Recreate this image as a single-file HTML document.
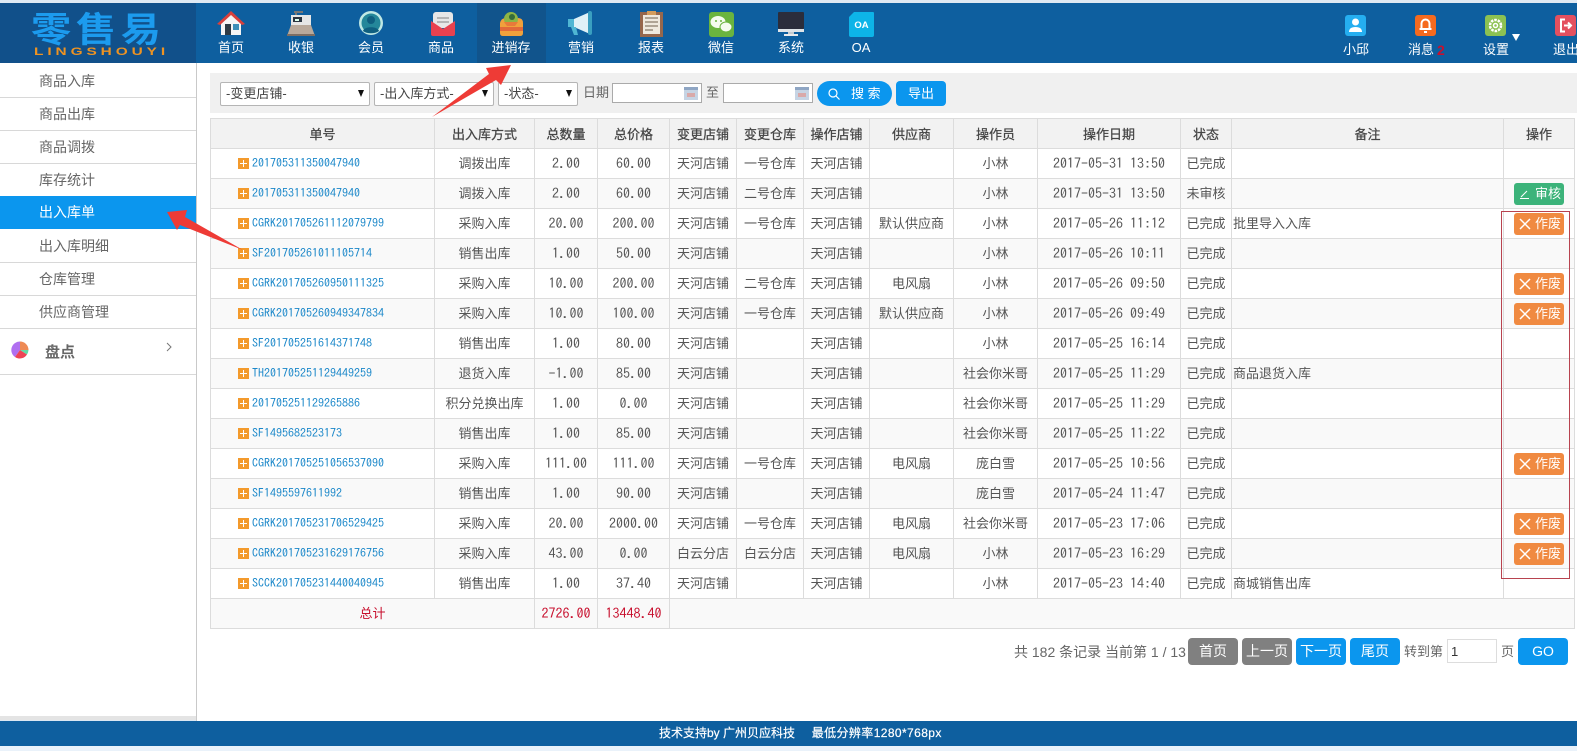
<!DOCTYPE html>
<html><head><meta charset="utf-8"><title>出入库单</title>
<style>
*{box-sizing:border-box}
html,body{margin:0;padding:0;width:1577px;height:751px;overflow:hidden;background:#fff}
body{position:relative;font-family:"Liberation Sans","Noto Sans CJK SC",sans-serif;font-size:13px;color:#555}
.a{position:absolute}
.nav{position:absolute;top:3px;width:70px;height:60px;text-align:center;color:#fff;font-size:13px}
.nav svg{position:absolute;left:17px;top:6px}
.nav span{position:absolute;left:0;right:0;top:35px;line-height:20px;white-space:nowrap}
.r{position:absolute;top:15px;width:21px;height:21px;border-radius:3px}
.rl{position:absolute;top:40px;color:#fff;font-size:13px;line-height:20px;white-space:nowrap}
.si{position:absolute;left:0;width:196px;height:33px;line-height:32px;padding-left:39px;font-size:14px;color:#666;border-bottom:1px solid #d8d8d8}
.sel{position:absolute;top:82px;height:24px;background:#fff;border:1px solid #b5b5b5;border-radius:2px;font-size:13px;color:#444;line-height:22px;padding-left:5px}
.sel i{position:absolute;right:5px;top:7px;width:0;height:0;border:3.5px solid transparent;border-top:7px solid #111;border-bottom:0}
.inp{position:absolute;top:83px;width:90px;height:20px;background:#fff;border:1px solid #aaa}
.inp b{position:absolute;right:3px;top:3px;width:14px;height:13px;background:#c6d4e4;border-top:3px solid #8fa6c4}
.inp b:after{content:"";position:absolute;left:3px;top:3px;width:8px;height:4px;background:#d9a9a9}
.btn{position:absolute;color:#fff;text-align:center;border-radius:4px;font-size:14px}
table{position:absolute;left:210px;top:118px;width:1365px;table-layout:fixed;border-collapse:collapse;font-size:13px;color:#555}
td,th{border:1px solid #dcdcdc;height:30px;padding:0;text-align:center;white-space:nowrap;overflow:hidden;font-weight:normal}
td{padding-bottom:2px}
th{background:#f2f2f2;color:#444;-webkit-text-stroke:.25px #444}
tr:nth-child(even) td{background:#fff}
tr:nth-child(odd) td{background:#f9f9f9}
.n{font-family:"IPAGothic",monospace;font-size:14px}
.l{text-align:left;padding-left:27px;font-family:"IPAGothic",monospace;font-size:12px;color:#1a87c9}
.l i{display:inline-block;width:11px;height:11px;background:#f39a2c;margin-right:3px;vertical-align:-2px;position:relative}
.l i:before{content:"";position:absolute;left:2px;right:2px;top:5px;height:1px;background:#fff}
.l i:after{content:"";position:absolute;top:2px;bottom:2px;left:5px;width:1px;background:#fff}
.t{text-align:left;padding-left:1px}
.z{display:block;width:50px;height:22px;margin-left:10px;background:#f08a41;color:#fff;border-radius:3px;line-height:22px;position:relative;top:1px;padding-left:21px;text-align:left}
.z svg{position:absolute;left:5px;top:5px}
.g{background:#3cb37a}
.red{color:#c8102e}
</style></head><body>
<div class="a" style="left:0;top:0;width:1577px;height:3px;background:#dfe9f3"></div>
<div class="a" style="left:0;top:3px;width:1577px;height:60px;background:#0e5f9f"></div>
<div class="a" style="left:0;top:3px;width:196px;height:60px;background:#11508a"></div>
<div class="a" style="left:31px;top:3px;font-size:35px;line-height:50px;font-weight:bold;color:#1c9bee;letter-spacing:4px;white-space:nowrap;font-family:'Noto Sans CJK SC',sans-serif;transform:scaleX(1.15);transform-origin:0 0">零售易</div>
<div class="a" style="left:34px;top:47px;font-size:11px;line-height:11px;font-weight:bold;color:#ee9322;letter-spacing:2.8px;white-space:nowrap;font-family:'Liberation Sans',sans-serif;transform:scaleX(1.4);transform-origin:0 0">LINGSHOUYI</div>
<div class="a" style="left:477px;top:3px;width:69px;height:60px;background:#11548c"></div>

<div class="nav" style="left:196px"><svg width="36" height="28" viewBox="0 0 36 28"><path d="M18 3 31 15 28 15V26H8V15H5Z" fill="#f4f4f4"/><path d="M4 15 18 2 32 15 29 16 18 6 7 16Z" fill="#d8403c"/><rect x="12" y="15" width="6" height="11" fill="#2d3a44"/><rect x="20" y="15" width="6" height="6" fill="#3d8fb8"/></svg><span>首页</span></div>
<div class="nav" style="left:266px"><svg width="36" height="28" viewBox="0 0 36 28"><rect x="11" y="2" width="9" height="2" fill="#777"/><rect x="12" y="3" width="2" height="5" fill="#777"/><rect x="8" y="6" width="20" height="13" fill="#e6e6e6"/><rect x="10" y="8" width="9" height="5" fill="#2a3440"/><rect x="12" y="10" width="4" height="2" fill="#dfe"/><path d="M8 16H28L32 27H4Z" fill="#b9a99b"/><rect x="4" y="25" width="28" height="2" fill="#7e6e63"/></svg><span>收银</span></div>
<div class="nav" style="left:336px"><svg width="36" height="28" viewBox="0 0 36 28"><circle cx="18" cy="14" r="12" fill="#bfe8e4"/><circle cx="18" cy="14" r="9.500" fill="#24879a"/><circle cx="18" cy="11" r="4" fill="#0f5f80"/><path d="M10 22C11 17 25 17 26 22 22 25 14 25 10 22Z" fill="#0f5f80"/></svg><span>会员</span></div>
<div class="nav" style="left:406px"><svg width="36" height="28" viewBox="0 0 36 28"><rect x="10" y="3" width="20" height="16" rx="3" fill="#e7e7e7"/><rect x="14" y="8" width="12" height="2" fill="#b5b5b5"/><rect x="14" y="12" width="12" height="2" fill="#b5b5b5"/><path d="M8 12 20 20 32 12V25Q32 27 30 27H10Q8 27 8 25Z" fill="#e8414f"/></svg><span>商品</span></div>
<div class="nav" style="left:476px"><svg width="36" height="28" viewBox="0 0 36 28"><path d="M7 14Q8 9 13 9H25Q30 9 30 14V24Q30 27 27 27H10Q7 27 7 24Z" fill="#f0a13c"/><rect x="7" y="18" width="23" height="4" fill="#e2693a"/><circle cx="18" cy="10" r="7" fill="#8fb545"/><circle cx="19" cy="8" r="3" fill="#356b3a"/><path d="M11 13 25 13 22 17H14Z" fill="#e87a3a"/></svg><span>进销存</span></div>
<div class="nav" style="left:546px"><svg width="36" height="28" viewBox="0 0 36 28"><path d="M5 10H11L27 3V25L11 18H5Z" fill="#dff1f7"/><rect x="5" y="10" width="6" height="8" fill="#4fb6d3"/><rect x="25" y="2" width="4" height="24" rx="2" fill="#3a9fc0"/><path d="M8 18H13L15 26H11Z" fill="#4fb6d3"/></svg><span>营销</span></div>
<div class="nav" style="left:616px"><svg width="36" height="28" viewBox="0 0 36 28"><rect x="7" y="3" width="23" height="25" fill="#96674c"/><rect x="10" y="6" width="17" height="19" fill="#efe9de"/><rect x="14" y="2" width="9" height="4" fill="#d39c5c"/><path d="M12 9H25M12 13H25M12 17H25M12 21H20" stroke="#9a8d7d" stroke-width="1.500"/></svg><span>报表</span></div>
<div class="nav" style="left:686px"><svg width="36" height="28" viewBox="0 0 36 28"><rect x="6" y="3" width="25" height="25" rx="3" fill="#6ab43f"/><ellipse cx="15" cy="13" rx="7.500" ry="6" fill="#f5fbf0"/><ellipse cx="23" cy="18" rx="6" ry="5" fill="#f5fbf0" stroke="#6ab43f"/><circle cx="13" cy="12" r="1" fill="#6ab43f"/><circle cx="18" cy="12" r="1" fill="#6ab43f"/></svg><span>微信</span></div>
<div class="nav" style="left:756px"><svg width="36" height="28" viewBox="0 0 36 28"><rect x="5" y="3" width="26" height="17" rx="1" fill="#2b2d3b"/><rect x="5" y="20" width="26" height="3" fill="#dfe4e8"/><rect x="15" y="23" width="6" height="2" fill="#c5cbd0"/><rect x="11" y="25" width="14" height="2" fill="#e8eaec"/></svg><span>系统</span></div>
<div class="nav" style="left:826px"><svg width="36" height="28" viewBox="0 0 36 28"><path d="M11 3H30Q31 3 31 4V26Q31 28 29 28H8Q6 28 6 26V8Z" fill="#0db4e8"/><text x="18.500" y="19" font-family="Liberation Sans" font-size="9.500" font-weight="bold" fill="#fff" text-anchor="middle">OA</text></svg><span>OA</span></div>

<div class="r" style="left:1345px;background:#25aef0"><svg width="21" height="21" viewBox="0 0 21 21"><circle cx="10.500" cy="7" r="3.500" fill="#fff"/><path d="M4 17Q4 12 10.500 12T17 17Z" fill="#fff"/></svg></div>
<div class="rl" style="left:1343px">小邱</div>
<div class="r" style="left:1415px;background:#f56a1e"><svg width="21" height="21" viewBox="0 0 21 21" fill="none" stroke="#fff" stroke-width="2"><path d="M6.500 13V8.500A4 4 0 0 1 14.500 8.500V13"/><path d="M4.500 14H16.500"/><path d="M9 17H12"/></svg></div>
<div class="rl" style="left:1408px">消息</div><div class="rl" style="left:1437px;color:#c8102e;font-weight:bold;font-size:14px">2</div>
<div class="r" style="left:1485px;background:#8cc152"><svg width="21" height="21" viewBox="0 0 21 21" fill="none" stroke="#fff"><circle cx="10.500" cy="10.500" r="5.500" stroke-width="2.500" stroke-dasharray="2.500 1"/><circle cx="10.500" cy="10.500" r="2" stroke-width="1.500"/></svg></div>
<div class="rl" style="left:1483px">设置</div>
<div class="a" style="left:1512px;top:34px;width:0;height:0;border:4px solid transparent;border-top:7px solid #fff;border-bottom:0"></div>
<div class="r" style="left:1555px;background:#e4505f"><svg width="21" height="21" viewBox="0 0 21 21" fill="none" stroke="#fff" stroke-width="2"><path d="M10 4.500H6V16.500H10"/><path d="M9 10.500H16M13 7.500 16 10.500 13 13.500"/></svg></div>
<div class="rl" style="left:1553px">退出</div>

<div class="si" style="top:65px">商品入库</div>
<div class="si" style="top:98px">商品出库</div>
<div class="si" style="top:131px">商品调拨</div>
<div class="si" style="top:164px">库存统计</div>
<div class="si" style="top:196px;background:#0b96ee;color:#fff;border:0">出入库单</div>
<div class="si" style="top:230px">出入库明细</div>
<div class="si" style="top:263px">仓库管理</div>
<div class="si" style="top:296px">供应商管理</div>
<div class="a" style="left:0;top:329px;width:196px;height:46px;border-bottom:1px solid #d8d8d8"></div>
<div class="a" style="left:196px;top:63px;width:1px;height:658px;background:#c9c9c9"></div>
<svg class="a" style="left:11px;top:341px" width="18" height="18" viewBox="0 0 18 18"><path d="M9 9V.500A8.500 8.500 0 0 0 4 16Z" fill="#b06ff0"/><path d="M9 9V.500A8.500 8.500 0 0 1 17.500 9Z" fill="#ee8a55"/><path d="M9 9H17.500A8.500 8.500 0 0 1 16 13.500Z" fill="#5fdca8"/><path d="M9 9 16 13.500A8.500 8.500 0 0 1 4 16Z" fill="#ee4455"/></svg>
<div class="a" style="left:45px;top:342px;font-size:15px;line-height:22px;font-weight:bold;color:#666">盘点</div>
<svg class="a" style="left:165px;top:342px" width="8" height="10" viewBox="0 0 8 10" fill="none" stroke="#777"><path d="M2 1 6 5 2 9"/></svg>
<div class="a" style="left:0;top:716px;width:196px;height:4px;background:#e4e4e4"></div>
<div class="a" style="left:0;top:720px;width:196px;height:1px;background:#dbe7f2"></div>

<div class="a" style="left:210px;top:73px;width:1367px;height:40px;background:#f0f0f0"></div>
<div class="sel" style="left:220px;width:150px">-变更店铺-<i></i></div>
<div class="sel" style="left:374px;width:120px">-出入库方式-<i></i></div>
<div class="sel" style="left:498px;width:80px">-状态-<i></i></div>
<div class="a" style="left:583px;top:82px;font-size:13px;line-height:22px;color:#666">日期</div>
<div class="inp" style="left:612px"><b></b></div>
<div class="a" style="left:706px;top:82px;font-size:13px;line-height:22px;color:#666">至</div>
<div class="inp" style="left:723px"><b></b></div>
<div class="btn" style="left:817px;top:81px;width:75px;height:25px;border-radius:13px;background:#0b96ee;line-height:25px;padding-left:34px;font-size:13px;text-align:left"><svg class="a" style="left:10px;top:6px" width="14" height="14" viewBox="0 0 14 14" fill="none" stroke="#fff" stroke-width="1.200"><circle cx="6" cy="6" r="4"/><path d="M9 9 12.500 12.500"/></svg>搜 索</div>
<div class="btn" style="left:896px;top:81px;width:50px;height:25px;background:#0b96ee;line-height:25px;font-size:13px">导出</div>

<table>
<colgroup><col style="width:224px"><col style="width:100px"><col style="width:63px"><col style="width:72px"><col style="width:67px"><col style="width:67px"><col style="width:66px"><col style="width:84px"><col style="width:84px"><col style="width:143px"><col style="width:51px"><col style="width:272px"><col style="width:71px"></colgroup>
<tr><th>单号</th><th>出入库方式</th><th>总数量</th><th>总价格</th><th>变更店铺</th><th>变更仓库</th><th>操作店铺</th><th>供应商</th><th>操作员</th><th>操作日期</th><th>状态</th><th>备注</th><th>操作</th></tr>
<tr><td class="l"><i></i>201705311350047940</td><td>调拨出库</td><td class="n">2.00</td><td class="n">60.00</td><td>天河店铺</td><td>一号仓库</td><td>天河店铺</td><td></td><td>小林</td><td class="n">2017-05-31 13:50</td><td>已完成</td><td></td><td></td></tr>
<tr><td class="l"><i></i>201705311350047940</td><td>调拨入库</td><td class="n">2.00</td><td class="n">60.00</td><td>天河店铺</td><td>二号仓库</td><td>天河店铺</td><td></td><td>小林</td><td class="n">2017-05-31 13:50</td><td>未审核</td><td></td><td><span class="z g"><svg width="11" height="12" viewBox="0 0 11 12" fill="none" stroke="#fff"><path d="M1 10.500H10M2 9 8 3"/></svg>审核</span></td></tr>
<tr><td class="l"><i></i>CGRK201705261112079799</td><td>采购入库</td><td class="n">20.00</td><td class="n">200.00</td><td>天河店铺</td><td>一号仓库</td><td>天河店铺</td><td>默认供应商</td><td>小林</td><td class="n">2017-05-26 11:12</td><td>已完成</td><td class="t">批里导入入库</td><td><span class="z"><svg width="12" height="12" viewBox="0 0 12 12" stroke="#fff" stroke-width="1.500"><path d="M1 1 11 11M11 1 1 11"/></svg>作废</span></td></tr>
<tr><td class="l"><i></i>SF201705261011105714</td><td>销售出库</td><td class="n">1.00</td><td class="n">50.00</td><td>天河店铺</td><td></td><td>天河店铺</td><td></td><td>小林</td><td class="n">2017-05-26 10:11</td><td>已完成</td><td></td><td></td></tr>
<tr><td class="l"><i></i>CGRK201705260950111325</td><td>采购入库</td><td class="n">10.00</td><td class="n">200.00</td><td>天河店铺</td><td>二号仓库</td><td>天河店铺</td><td>电风扇</td><td>小林</td><td class="n">2017-05-26 09:50</td><td>已完成</td><td></td><td><span class="z"><svg width="12" height="12" viewBox="0 0 12 12" stroke="#fff" stroke-width="1.500"><path d="M1 1 11 11M11 1 1 11"/></svg>作废</span></td></tr>
<tr><td class="l"><i></i>CGRK201705260949347834</td><td>采购入库</td><td class="n">10.00</td><td class="n">100.00</td><td>天河店铺</td><td>一号仓库</td><td>天河店铺</td><td>默认供应商</td><td>小林</td><td class="n">2017-05-26 09:49</td><td>已完成</td><td></td><td><span class="z"><svg width="12" height="12" viewBox="0 0 12 12" stroke="#fff" stroke-width="1.500"><path d="M1 1 11 11M11 1 1 11"/></svg>作废</span></td></tr>
<tr><td class="l"><i></i>SF201705251614371748</td><td>销售出库</td><td class="n">1.00</td><td class="n">80.00</td><td>天河店铺</td><td></td><td>天河店铺</td><td></td><td>小林</td><td class="n">2017-05-25 16:14</td><td>已完成</td><td></td><td></td></tr>
<tr><td class="l"><i></i>TH201705251129449259</td><td>退货入库</td><td class="n">-1.00</td><td class="n">85.00</td><td>天河店铺</td><td></td><td>天河店铺</td><td></td><td>社会你米哥</td><td class="n">2017-05-25 11:29</td><td>已完成</td><td class="t">商品退货入库</td><td></td></tr>
<tr><td class="l"><i></i>201705251129265886</td><td>积分兑换出库</td><td class="n">1.00</td><td class="n">0.00</td><td>天河店铺</td><td></td><td>天河店铺</td><td></td><td>社会你米哥</td><td class="n">2017-05-25 11:29</td><td>已完成</td><td></td><td></td></tr>
<tr><td class="l"><i></i>SF1495682523173</td><td>销售出库</td><td class="n">1.00</td><td class="n">85.00</td><td>天河店铺</td><td></td><td>天河店铺</td><td></td><td>社会你米哥</td><td class="n">2017-05-25 11:22</td><td>已完成</td><td></td><td></td></tr>
<tr><td class="l"><i></i>CGRK201705251056537090</td><td>采购入库</td><td class="n">111.00</td><td class="n">111.00</td><td>天河店铺</td><td>一号仓库</td><td>天河店铺</td><td>电风扇</td><td>庞白雪</td><td class="n">2017-05-25 10:56</td><td>已完成</td><td></td><td><span class="z"><svg width="12" height="12" viewBox="0 0 12 12" stroke="#fff" stroke-width="1.500"><path d="M1 1 11 11M11 1 1 11"/></svg>作废</span></td></tr>
<tr><td class="l"><i></i>SF1495597611992</td><td>销售出库</td><td class="n">1.00</td><td class="n">90.00</td><td>天河店铺</td><td></td><td>天河店铺</td><td></td><td>庞白雪</td><td class="n">2017-05-24 11:47</td><td>已完成</td><td></td><td></td></tr>
<tr><td class="l"><i></i>CGRK201705231706529425</td><td>采购入库</td><td class="n">20.00</td><td class="n">2000.00</td><td>天河店铺</td><td>一号仓库</td><td>天河店铺</td><td>电风扇</td><td>社会你米哥</td><td class="n">2017-05-23 17:06</td><td>已完成</td><td></td><td><span class="z"><svg width="12" height="12" viewBox="0 0 12 12" stroke="#fff" stroke-width="1.500"><path d="M1 1 11 11M11 1 1 11"/></svg>作废</span></td></tr>
<tr><td class="l"><i></i>CGRK201705231629176756</td><td>采购入库</td><td class="n">43.00</td><td class="n">0.00</td><td>白云分店</td><td>白云分店</td><td>天河店铺</td><td>电风扇</td><td>小林</td><td class="n">2017-05-23 16:29</td><td>已完成</td><td></td><td><span class="z"><svg width="12" height="12" viewBox="0 0 12 12" stroke="#fff" stroke-width="1.500"><path d="M1 1 11 11M11 1 1 11"/></svg>作废</span></td></tr>
<tr><td class="l"><i></i>SCCK201705231440040945</td><td>销售出库</td><td class="n">1.00</td><td class="n">37.40</td><td>天河店铺</td><td></td><td>天河店铺</td><td></td><td>小林</td><td class="n">2017-05-23 14:40</td><td>已完成</td><td class="t">商城销售出库</td><td></td></tr>
<tr><td colspan="2" class="red">总计</td><td class="n red">2726.00</td><td class="n red">13448.40</td><td colspan="9"></td></tr>
</table>

<div class="a" style="left:1014px;top:641px;font-size:14px;line-height:22px;color:#666;white-space:nowrap">共 182 条记录 当前第 1 / 13</div>
<div class="btn" style="left:1188px;top:638px;width:50px;height:27px;line-height:27px;background:#808080">首页</div>
<div class="btn" style="left:1242px;top:638px;width:50px;height:27px;line-height:27px;background:#808080">上一页</div>
<div class="btn" style="left:1296px;top:638px;width:50px;height:27px;line-height:27px;background:#0b96ee">下一页</div>
<div class="btn" style="left:1350px;top:638px;width:50px;height:27px;line-height:27px;background:#0b96ee">尾页</div>
<div class="a" style="left:1404px;top:641px;font-size:13px;line-height:22px;color:#666">转到第</div>
<div class="a" style="left:1447px;top:639px;width:50px;height:24px;border:1px solid #ddd;font-size:13px;line-height:23px;padding-left:3px;color:#333">1</div>
<div class="a" style="left:1501px;top:641px;font-size:13px;line-height:22px;color:#666">页</div>
<div class="btn" style="left:1518px;top:638px;width:50px;height:27px;line-height:27px;background:#0b96ee">GO</div>

<div class="a" style="left:0;top:721px;width:1577px;height:25px;background:#0e5f9f;color:#fff;font-size:12px;line-height:25px;white-space:pre;padding-left:659px;-webkit-text-stroke:.2px #fff">技术支持by 广州贝应科技     <span style="letter-spacing:.4px">最低分辨率1280*768px</span></div>
<div class="a" style="left:0;top:746px;width:1577px;height:5px;background:#eaf2fa"></div>

<div class="a" style="left:1501px;top:211px;width:69px;height:368px;border:1px solid #b8434f"></div>
<svg class="a" style="left:0;top:0" width="1577" height="751" viewBox="0 0 1577 751"><path d="M432 117 489 74 486 68 511 65 501 85 496 80Z" fill="#ee3b36"/><path d="M167 212 187 210 185 217 243 250 180 225 177 230Z" fill="#ee3b36"/></svg>
</body></html>
